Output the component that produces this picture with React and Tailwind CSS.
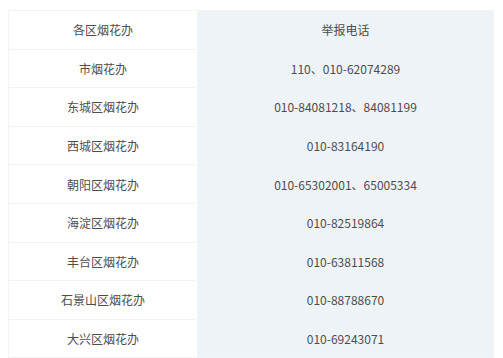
import React from "react";

const rows = [
  ["市烟花办", "110、010-62074289"],
  ["东城区烟花办", "010-84081218、84081199"],
  ["西城区烟花办", "010-83164190"],
  ["朝阳区烟花办", "010-65302001、65005334"],
  ["海淀区烟花办", "010-82519864"],
  ["丰台区烟花办", "010-63811568"],
  ["石景山区烟花办", "010-88788670"],
  ["大兴区烟花办", "010-69243071"],
];

export default function App() {
  const all = [["各区烟花办", "举报电话"], ...rows];
  return (
    <div
      className="w-[503px] h-[358px] bg-white overflow-hidden pt-[10px] pl-[8px]"
      style={{ fontFamily: '"Noto Sans CJK SC", "Noto Sans", sans-serif' }}
    >
      <div className="w-[486px] border-l border-t border-r border-[#f2f3f5]">
        {all.map(([a, b], i) => (
          <div key={i} className="flex h-[38.6px] border-b border-[#f2f3f5]">
            <div className="w-[189px] flex items-center justify-center pt-[1px] text-[12px] text-[#4d4d4d] bg-white border-r border-[#f2f3f5]">
              {a}
            </div>
            <div className="flex-1 flex items-center justify-center pt-[1px] text-[12px] text-[#4d4d4d] bg-[#edf3f7]">
              {b}
            </div>
          </div>
        ))}
      </div>
    </div>
  );
}
